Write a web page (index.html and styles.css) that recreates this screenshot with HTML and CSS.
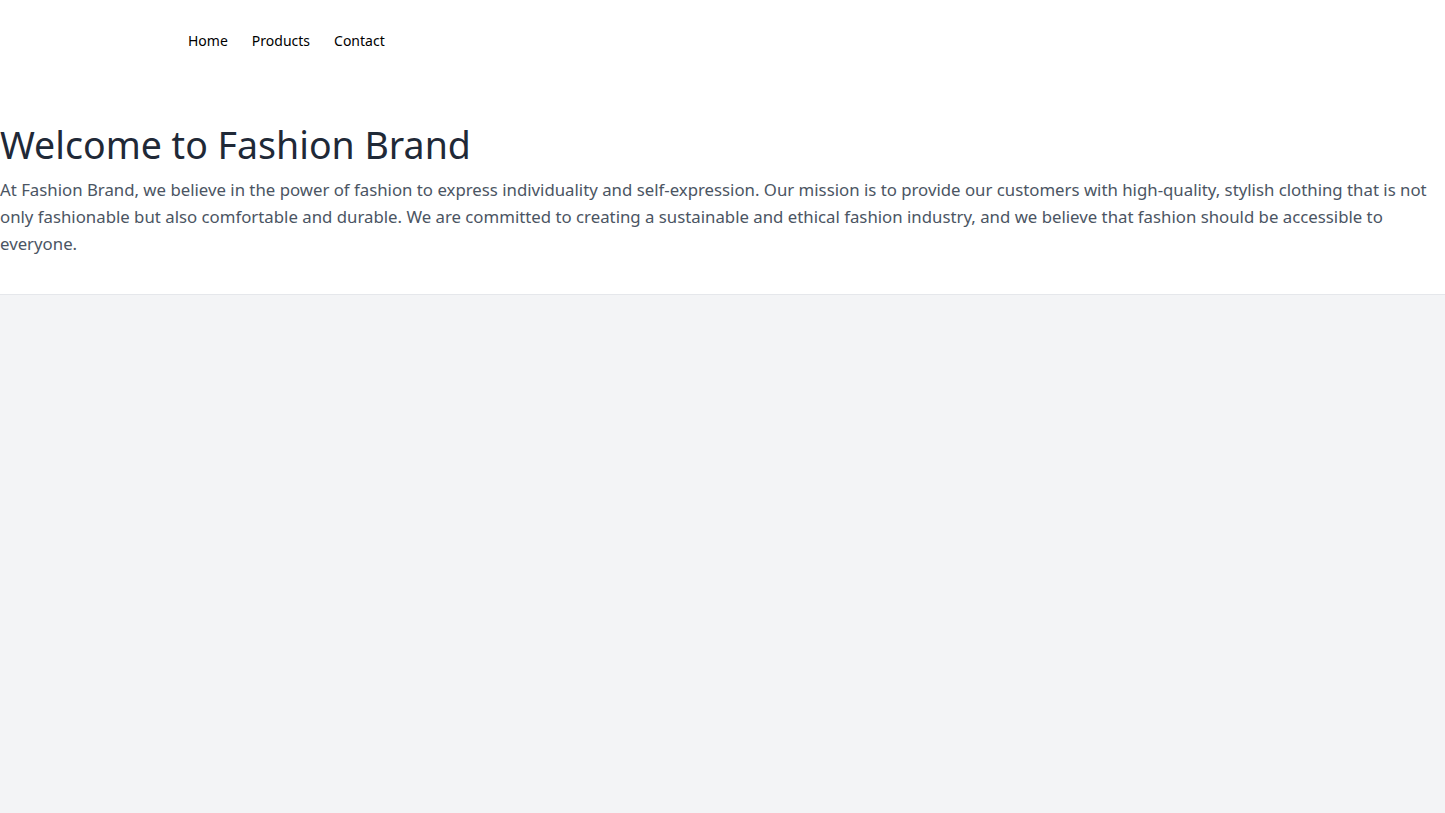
FILE: index.html
```html
<!DOCTYPE html>
<html lang="en">
<head>
<meta charset="utf-8">
<title>Fashion Brand</title>
<link rel="stylesheet" href="styles.css">
</head>
<body>
<header class="site-header">
  <nav class="nav">
    <a href="#" class="nav-link">Home</a>
    <a href="#" class="nav-link">Products</a>
    <a href="#" class="nav-link">Contact</a>
  </nav>
  <section class="hero">
    <h1 class="hero-title">Welcome to Fashion Brand</h1>
    <p class="hero-text">At Fashion Brand, we believe in the power of fashion to express individuality and self-expression. Our mission is to provide our customers with high-quality, stylish clothing that is not only fashionable but also comfortable and durable. We are committed to creating a sustainable and ethical fashion industry, and we believe that fashion should be accessible to everyone.</p>
  </section>
</header>
<main class="main"></main>
</body>
</html>
```

FILE: styles.css
```css
html, body {
  margin: 0;
  padding: 0;
  height: 100%;
}
body {
  font-family: "Noto Sans", sans-serif;
  background: #f3f4f6;
  display: flex;
  flex-direction: column;
}
.site-header {
  background: #ffffff;
  border-bottom: 1px solid #e5e7eb;
}
.nav {
  display: flex;
  gap: 24px;
  padding: 31px 0 0 188px;
  height: 20px;
}
.nav-link {
  font-size: 14px;
  line-height: 20px;
  color: #000000;
  text-decoration: none;
}
.hero {
  padding: 74px 0 37px 0;
}
.hero-title {
  margin: 0;
  font-size: 37.5px;
  line-height: 40px;
  font-weight: 400;
  color: #1f2937;
}
.hero-text {
  margin: 11px 0 0 0;
  font-size: 16.8px;
  line-height: 27px;
  color: #4b5563;
}
.main {
  flex: 1;
}
```
